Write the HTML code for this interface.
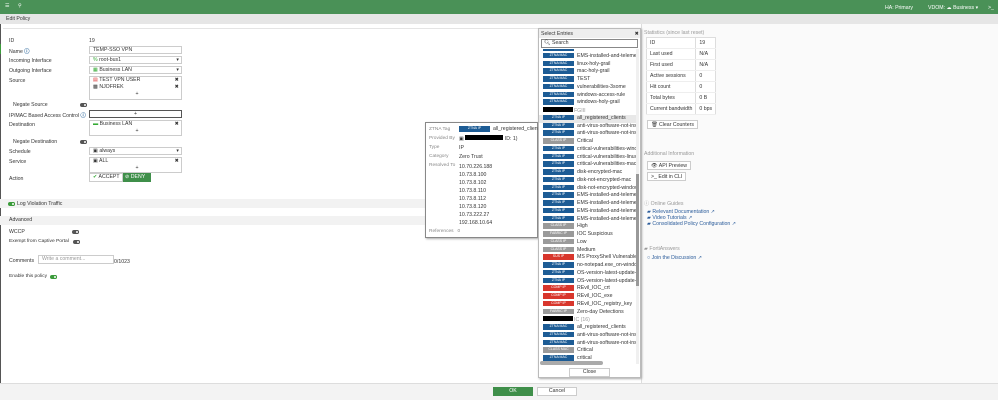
<!DOCTYPE html>
<html><head><meta charset="utf-8"><style>
*{box-sizing:border-box;margin:0;padding:0}
body{width:998px;height:400px;overflow:hidden;background:#fff;font-family:"Liberation Sans",sans-serif;font-size:5.2px;color:#333;position:relative}
.a{position:absolute;white-space:nowrap}
.top{left:0;top:0;width:998px;height:14px;background:#4a9157;color:#fff}
.hdr{left:0;top:14px;width:998px;height:10px;background:#e6e6e6}
.lbl{left:9px}
.box{position:absolute;border:1px solid #ccc;background:#fff}
.sel{left:89px;width:93px;height:8px}
.tog{display:inline-block;width:7px;height:4px;border-radius:2px;background:#555;position:absolute}
.tog:after{content:"";position:absolute;right:0;top:0;width:4px;height:4px;border-radius:2px;background:#fff;border:1px solid #555;box-sizing:border-box}
.tog.on{background:#3b9b3b}
.tog.on:after{border-color:#3b9b3b}
.band{left:0;width:640px;background:#f2f2f2}
.rp{left:641px;top:24px;width:357px;height:359px;background:#fafafa;border-left:1px solid #ddd}
.tbl td{border-bottom:1px solid #eee;height:11px;padding:0 3px;font-size:5.2px}
.btn{position:absolute;border:1px solid #ccc;background:#fff;padding:1px 3px;height:9px;line-height:6px}
.link{color:#2a5b9a}
.tag{display:inline-block;width:31px;height:5.5px;color:#fff;font-size:3.5px;text-align:center;line-height:5.5px;margin-right:3px;vertical-align:middle}
.z{background:#1d5c95}.c{background:#9a9a9a}.r{background:#d8362c}
.li{height:7.75px;line-height:7.75px;padding-left:4px;font-size:5.2px;overflow:hidden}
</style></head><body>
<div class="a" style="left:0;top:24px;width:1px;height:359px;background:#555"></div>
<div class="a" style="left:0;top:44px;width:1px;height:10px;background:#3b9b3b"></div>
<div class="a" style="left:3px;top:28px;width:637px;height:1px;background:#e4e4e4"></div>
<div class="a top"><span class="a" style="left:5px;top:3px">☰</span><span class="a" style="left:18px;top:3px">&#9906;</span>
<span class="a" style="left:885px;top:5px">HA: Primary</span><span class="a" style="left:928px;top:5px">VDOM: ☁ Business ▾</span><span class="a" style="left:988px;top:5px">&gt;_</span></div>
<div class="a hdr"><span class="a" style="left:6px;top:2px">Edit Policy</span></div>

<span class="a lbl" style="top:38px">ID</span><span class="a" style="left:89px;top:38px">19</span>
<span class="a lbl" style="top:48px">Name <b style="color:#1d5c95">ⓘ</b></span><div class="box sel" style="top:46px;padding-left:3px;line-height:6px">TEMP-SSO VPN</div>
<span class="a lbl" style="top:58px">Incoming Interface</span><div class="box sel" style="top:56px;padding-left:3px;line-height:6px"><span style="color:#3a3">%</span> root-bus1<span style="float:right;margin-right:2px">▾</span></div>
<span class="a lbl" style="top:68px">Outgoing Interface</span><div class="box sel" style="top:66px;padding-left:3px;line-height:6px"><span style="color:#3a3">▦</span> Business LAN<span style="float:right;margin-right:2px">▾</span></div>
<span class="a lbl" style="top:78px">Source</span><div class="box" style="left:89px;top:76px;width:93px;height:24px;line-height:7px;padding-left:3px"><div><span style="color:#d33">▤</span> TEST VPN USER<span style="float:right;margin-right:2px">✖</span></div><div>▩ NJOFREK<span style="float:right;margin-right:2px">✖</span></div><div style="text-align:center">+</div></div>
<span class="a" style="left:13px;top:102px">Negate Source</span><span class="tog" style="left:80px;top:103px"></span>
<span class="a lbl" style="top:112px">IP/MAC Based Access Control <b style="color:#1d5c95">ⓘ</b></span><div class="box" style="left:89px;top:110px;width:93px;height:8px;border-color:#555;text-align:center;line-height:6px">+</div>
<span class="a lbl" style="top:122px">Destination</span><div class="box" style="left:89px;top:120px;width:93px;height:16px;line-height:7px;padding-left:3px"><div><span style="color:#3a3">▬</span> Business LAN<span style="float:right;margin-right:2px">✖</span></div><div style="text-align:center">+</div></div>
<span class="a" style="left:13px;top:139px">Negate Destination</span><span class="tog" style="left:80px;top:140px"></span>
<span class="a lbl" style="top:149px">Schedule</span><div class="box sel" style="top:147px;padding-left:3px;line-height:6px">▣ always<span style="float:right;margin-right:2px">▾</span></div>
<span class="a lbl" style="top:159px">Service</span><div class="box" style="left:89px;top:157px;width:93px;height:16px;line-height:7px;padding-left:3px"><div>▣ ALL<span style="float:right;margin-right:2px">✖</span></div><div style="text-align:center">+</div></div>
<span class="a lbl" style="top:176px">Action</span>
<div class="box" style="left:89px;top:173px;width:34px;height:9px;line-height:7px;padding-left:3px"><span style="color:#3a3">✔</span> ACCEPT</div>
<div class="a" style="left:123px;top:173px;width:28px;height:9px;background:#3f8f4a;color:#fff;line-height:9px;padding-left:2px">⊘ DENY</div>

<div class="a band" style="top:199px;height:9px"></div><span class="tog on" style="left:8px;top:202px"></span><span class="a" style="left:17px;top:201px">Log Violation Traffic</span>
<div class="a band" style="top:216px;height:9px"></div><span class="a" style="left:9px;top:217px">Advanced</span>
<span class="a lbl" style="top:229px">WCCP</span><span class="tog" style="left:72px;top:230px"></span>
<span class="a lbl" style="top:239px;font-size:4.9px">Exempt from Captive Portal</span><span class="tog" style="left:73px;top:240px"></span>
<span class="a lbl" style="top:258px">Comments</span><div class="box" style="left:38px;top:255px;width:76px;height:9px;color:#999;padding-left:3px;line-height:7px">Write a comment...</div><span class="a" style="left:114px;top:259px">0/1023</span>
<span class="a lbl" style="top:274px;font-size:4.9px">Enable this policy</span><span class="tog on" style="left:50px;top:275px"></span>

<div class="a rp"></div>
<span class="a" style="left:644px;top:30px;color:#999">Statistics (since last reset)</span>
<table class="a tbl" style="left:646px;top:37px;border:1px solid #ddd;border-collapse:collapse;background:#fff">
<tr><td>ID</td><td style="border-left:1px solid #ddd">19</td></tr><tr><td>Last used</td><td style="border-left:1px solid #ddd">N/A</td></tr><tr><td>First used</td><td style="border-left:1px solid #ddd">N/A</td></tr><tr><td>Active sessions</td><td style="border-left:1px solid #ddd">0</td></tr><tr><td>Hit count</td><td style="border-left:1px solid #ddd">0</td></tr><tr><td>Total bytes</td><td style="border-left:1px solid #ddd">0 B</td></tr><tr><td>Current bandwidth</td><td style="border-left:1px solid #ddd">0 bps</td></tr></table>
<div class="btn" style="left:647px;top:120px">🗑 Clear Counters</div>
<span class="a" style="left:644px;top:151px;color:#999">Additional Information</span>
<div class="btn" style="left:647px;top:161px">👁 API Preview</div>
<div class="btn" style="left:647px;top:172px">&gt;_ Edit in CLI</div>
<span class="a" style="left:644px;top:200px;color:#999">ⓘ Online Guides</span>
<span class="a link" style="left:647px;top:209px">▰ Relevant Documentation ↗</span>
<span class="a link" style="left:647px;top:215px">▰ Video Tutorials ↗</span>
<span class="a link" style="left:647px;top:221px">▰ Consolidated Policy Configuration ↗</span>
<span class="a" style="left:644px;top:246px;color:#999">▰ FortiAnswers</span>
<span class="a link" style="left:647px;top:255px">○ Join the Discussion ↗</span>

<div class="a" style="left:0;top:383px;width:998px;height:17px;background:#f3f3f3;border-top:1px solid #ddd"></div>
<div class="a" style="left:493px;top:387px;width:40px;height:9px;background:#3f8f4a;color:#fff;text-align:center;line-height:9px">OK</div>
<div class="box" style="left:537px;top:387px;width:40px;height:9px;text-align:center;line-height:7px">Cancel</div>

<div class="a" style="left:425px;top:122px;width:113px;height:116px;background:#fff;border:1.5px solid #888;box-shadow:1px 1px 2px #aaa">
<div class="a" style="left:3px;top:4px;color:#888;font-size:4.8px">ZTNA Tag</div><div class="a" style="left:33px;top:3px"><span class="tag z">ZTNA IP</span>all_registered_clients</div>
<div class="a" style="left:3px;top:13px;color:#888;font-size:4.8px">Provided By</div><div class="a" style="left:33px;top:12px">▣ <span style="display:inline-block;width:38px;height:5px;background:#000"></span> ID: 1)</div>
<div class="a" style="left:3px;top:22px;color:#888;font-size:4.8px">Type</div><div class="a" style="left:33px;top:22px">IP</div>
<div class="a" style="left:3px;top:31px;color:#888;font-size:4.8px">Category</div><div class="a" style="left:33px;top:31px">Zero Trust</div>
<div class="a" style="left:3px;top:40px;color:#888;font-size:4.8px">Resolved To</div>
<div class="a" style="left:33px;top:40px;line-height:8px">10.70.226.188<br>10.73.8.100<br>10.73.8.102<br>10.73.8.110<br>10.73.8.112<br>10.73.8.120<br>10.73.222.27<br>192.168.10.64</div>
<div class="a" style="left:3px;top:106px;color:#888;font-size:4.8px">References &nbsp; 0</div>
</div>

<div class="a" style="left:538px;top:28px;width:103px;height:350px;background:#fff;border:1px solid #bbb;box-shadow:1px 1px 2px #aaa;overflow:hidden">
<div class="a" style="left:0;top:0;width:102px;height:9px;background:#eee;padding:1.5px 2px">Select Entries<span style="float:right">✖</span></div>
<div class="a" style="left:2px;top:10px;width:97px;height:9px;border:1px solid #888;padding-left:2px;line-height:7px">🔍︎ Search</div>
<div class="a" style="left:0;top:20px;width:97px;height:312px;overflow:hidden">
<div style="margin-top:-4px">
<div class="li"><span class="tag z">ZTNA MAC</span>EMS-installed-and-telemetr</div>
<div class="li"><span class="tag z">ZTNA MAC</span>EMS-installed-and-telemetr</div>
<div class="li"><span class="tag z">ZTNA MAC</span>linux-holy-grail</div>
<div class="li"><span class="tag z">ZTNA MAC</span>mac-holy-grail</div>
<div class="li"><span class="tag z">ZTNA MAC</span>TEST</div>
<div class="li"><span class="tag z">ZTNA MAC</span>vulnerabilities-3some</div>
<div class="li"><span class="tag z">ZTNA MAC</span>windows-access-rule</div>
<div class="li"><span class="tag z">ZTNA MAC</span>windows-holy-grail</div>
<div class="li" style="color:#999"><span style="display:inline-block;width:30px;height:5px;background:#000;margin-right:1px"></span>FGIII</div>
<div class="li" style="background:#e8e8e8"><span class="tag z">ZTNA IP</span>all_registered_clients</div>
<div class="li"><span class="tag z">ZTNA IP</span>anti-virus-software-not-inst</div>
<div class="li"><span class="tag z">ZTNA IP</span>anti-virus-software-not-inst</div>
<div class="li"><span class="tag c">CLASS IP</span>Critical</div>
<div class="li"><span class="tag z">ZTNA IP</span>critical-vulnerabilities-windo</div>
<div class="li"><span class="tag z">ZTNA IP</span>critical-vulnerabilities-linux</div>
<div class="li"><span class="tag z">ZTNA IP</span>critical-vulnerabilities-mac</div>
<div class="li"><span class="tag z">ZTNA IP</span>disk-encrypted-mac</div>
<div class="li"><span class="tag z">ZTNA IP</span>disk-not-encrypted-mac</div>
<div class="li"><span class="tag z">ZTNA IP</span>disk-not-encrypted-window</div>
<div class="li"><span class="tag z">ZTNA IP</span>EMS-installed-and-telemetr</div>
<div class="li"><span class="tag z">ZTNA IP</span>EMS-installed-and-telemetr</div>
<div class="li"><span class="tag z">ZTNA IP</span>EMS-installed-and-telemetr</div>
<div class="li"><span class="tag z">ZTNA IP</span>EMS-installed-and-telemetr</div>
<div class="li"><span class="tag c">CLASS IP</span>High</div>
<div class="li"><span class="tag c">FABRIC IP</span>IOC Suspicious</div>
<div class="li"><span class="tag c">CLASS IP</span>Low</div>
<div class="li"><span class="tag c">CLASS IP</span>Medium</div>
<div class="li"><span class="tag r">SUS IP</span>MS ProxyShell Vulnerable</div>
<div class="li"><span class="tag z">ZTNA IP</span>no-notepad.exe_on-window</div>
<div class="li"><span class="tag z">ZTNA IP</span>OS-version-latest-update-m</div>
<div class="li"><span class="tag z">ZTNA IP</span>OS-version-latest-update-w</div>
<div class="li"><span class="tag r">COMP IP</span>REvil_IOC_crt</div>
<div class="li"><span class="tag r">COMP IP</span>REvil_IOC_exe</div>
<div class="li"><span class="tag r">COMP IP</span>REvil_IOC_registry_key</div>
<div class="li"><span class="tag c">FABRIC IP</span>Zero-day Detections</div>
<div class="li" style="color:#999"><span style="display:inline-block;width:30px;height:5px;background:#000;margin-right:1px"></span>IC (16)</div>
<div class="li"><span class="tag z">ZTNA MAC</span>all_registered_clients</div>
<div class="li"><span class="tag z">ZTNA MAC</span>anti-virus-software-not-inst</div>
<div class="li"><span class="tag z">ZTNA MAC</span>anti-virus-software-not-inst</div>
<div class="li"><span class="tag c">CLASS MAC</span>Critical</div>
<div class="li"><span class="tag z">ZTNA MAC</span>critical</div>
</div></div>
<div class="a" style="left:97px;top:20px;width:3px;height:315px;background:#f0f0f0"></div>
<div class="a" style="left:97px;top:145px;width:3px;height:112px;background:#999"></div>
<div class="a" style="left:1px;top:332px;width:63px;height:4px;background:#aaa;border-radius:2px"></div>
<div class="box" style="left:30px;top:339px;width:41px;height:9px;text-align:center;line-height:7px">Close</div>
</div>
</body></html>
